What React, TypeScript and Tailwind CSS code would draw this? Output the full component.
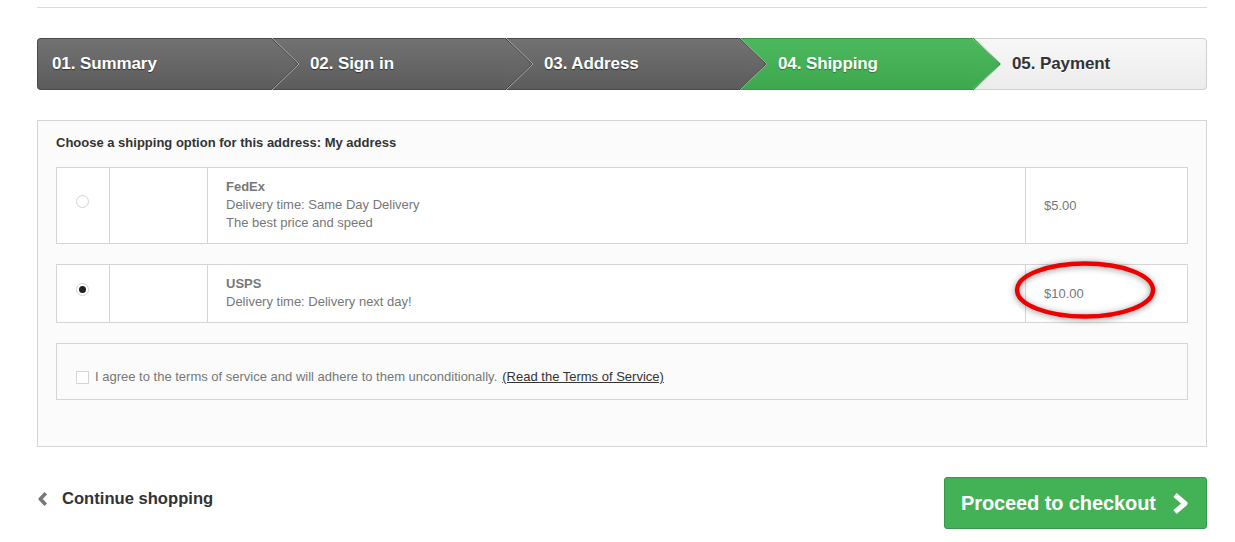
import React from 'react';

type Step = {
  label: string;
  kind: 'done' | 'current' | 'todo';
};

const STEPS: Step[] = [
  { label: '01. Summary', kind: 'done' },
  { label: '02. Sign in', kind: 'done' },
  { label: '03. Address', kind: 'done' },
  { label: '04. Shipping', kind: 'current' },
  { label: '05. Payment', kind: 'todo' },
];

// arrow head colours, same as the step body gradient
const ARROW = {
  done: { top: '#727272', bottom: '#5c5c5c', edge: '#a9a9a9', dark: '#3f3f3f' },
  current: { top: '#4cb85d', bottom: '#3ea84f', edge: '#9fdaa7', dark: '#2f8a3e' },
  todo: { top: '#f7f7f7', bottom: '#ececec', edge: '#cfcfcf', dark: '#cfcfcf' },
};

const Steps: React.FC = () => (
  <ul className="flex h-[52px]">
    {STEPS.map((step, i) => {
      const first = i === 0;
      const last = i === STEPS.length - 1;
      const c = ARROW[step.kind];
      const body =
        step.kind === 'done'
          ? 'bg-gradient-to-b from-[#727272] to-[#5c5c5c] border-[#4a4a4a] text-white [text-shadow:0_1px_1px_#333]'
          : step.kind === 'current'
          ? 'bg-gradient-to-b from-[#4cb85d] to-[#3ea84f] border-[#36994a] text-white [text-shadow:0_1px_1px_#2a7a36]'
          : 'bg-gradient-to-b from-[#f7f7f7] to-[#ececec] border-[#cfcfcf] text-[#333] [text-shadow:0_1px_#fff]';
      const z = ['z-50', 'z-40', 'z-30', 'z-20', 'z-10'][i];
      return (
        <li
          key={step.label}
          className={`relative flex w-[234px] items-center border-y text-[17px] font-bold tracking-[-0.1px] ${body} ${z} ${
            first ? 'rounded-l-[4px] border-l pl-[14px]' : 'pl-[39px]'
          } ${last ? 'rounded-r-[4px] border-r' : ''}`}
        >
          <span>{step.label}</span>
          {!last && (
            <svg
              className="absolute left-full top-[-1px] overflow-visible"
              width="28"
              height="52"
              viewBox="0 0 28 52"
            >
              <defs>
                <linearGradient id={`arrow-${i}`} x1="0" y1="0" x2="0" y2="1">
                  <stop offset="0" stopColor={c.top} />
                  <stop offset="1" stopColor={c.bottom} />
                </linearGradient>
              </defs>
              <polygon points="-1,0 27,26 -1,52" fill={`url(#arrow-${i})`} />
              <polyline points="0,0 27,26 0,52" fill="none" stroke={c.dark} strokeWidth="1" />
              <polyline points="1,0 28,26 1,52" fill="none" stroke={c.edge} strokeWidth="1" />
            </svg>
          )}
        </li>
      );
    })}
  </ul>
);

const Chevron: React.FC<{ dir: 'left' | 'right'; w: number; h: number; sw: number; className?: string }> = ({
  dir,
  w,
  h,
  sw,
  className,
}) => {
  const p = sw / 2 + 0.5;
  const pts =
    dir === 'right'
      ? `${p},${p} ${w - p},${h / 2} ${p},${h - p}`
      : `${w - p},${p} ${p},${h / 2} ${w - p},${h - p}`;
  return (
    <svg className={className} width={w} height={h} viewBox={`0 0 ${w} ${h}`}>
      <polyline points={pts} fill="none" stroke="currentColor" strokeWidth={sw} strokeLinejoin="round" />
    </svg>
  );
};

const Radio: React.FC<{ checked?: boolean }> = ({ checked }) => (
  <span className="flex h-[13px] w-[13px] items-center justify-center rounded-full border border-[#d3d3d3] bg-white">
    {checked && <span className="h-[7px] w-[7px] rounded-full bg-[#222]" />}
  </span>
);

const Carrier: React.FC<{
  checked?: boolean;
  name: string;
  lines: string[];
  price: string;
  circled?: boolean;
}> = ({ checked, name, lines, price, circled }) => (
  <div className="flex border border-[#d6d4d4] bg-white text-[13px] leading-[18px] text-[#777]">
    <div className="flex w-[53px] items-center justify-center border-r border-[#d6d4d4] pb-[9px] pr-[2px]">
      <Radio checked={checked} />
    </div>
    <div className="w-[98px] border-r border-[#d6d4d4]" />
    <div className="flex-1 border-r border-[#d6d4d4] px-[18px] pb-[11px] pt-[10px]">
      <div className="font-bold">{name}</div>
      {lines.map(l => (
        <div key={l}>{l}</div>
      ))}
    </div>
    <div className="relative flex w-[161px] items-center pl-[18px]">
      {price}
      {circled && (
        <svg
          className="absolute left-[-12px] top-[-4px] overflow-visible [filter:drop-shadow(0_1px_3px_rgba(0,0,0,0.45))]"
          width="142"
          height="58"
          viewBox="0 0 142 58"
        >
          <ellipse cx="71" cy="29" rx="68" ry="26.5" fill="none" stroke="#ee0000" strokeWidth="4.5" />
        </svg>
      )}
    </div>
  </div>
);

export default function App() {
  return (
    <div className="min-h-[542px] bg-white font-['Liberation_Sans',Arial,sans-serif]">
      <div className="ml-[37px] w-[1170px] pt-[7px]">
        <div className="border-t border-[#dcdcdc]" />

        <div className="mt-[30px]">
          <Steps />
        </div>

        {/* shipping options */}
        <div className="mt-[30px] border border-[#d6d4d4] bg-[#fbfbfb] px-[18px] pb-[46px] pt-[13px]">
          <p className="text-[13px] font-bold leading-[18px] text-[#333]">
            Choose a shipping option for this address: My address
          </p>
          <div className="mt-[15px] flex flex-col gap-[20px]">
            <Carrier
              name="FedEx"
              lines={['Delivery time: Same Day Delivery', 'The best price and speed']}
              price="$5.00"
            />
            <Carrier checked name="USPS" lines={['Delivery time: Delivery next day!']} price="$10.00" circled />
          </div>

          <div className="mt-[20px] flex items-center border border-[#d6d4d4] bg-[#fbfbfb] pb-[13px] pl-[19px] pt-[24px] text-[13px] leading-[18px] text-[#777]">
            <span className="mr-[6px] h-[13px] w-[13px] border border-[#d6d4d4] bg-white" />
            <span>I agree to the terms of service and will adhere to them unconditionally.</span>
            <a className="ml-[5px] text-[#333] underline">(Read the Terms of Service)</a>
          </div>
        </div>

        {/* footer actions */}
        <div className="mt-[30px] flex items-center justify-between">
          <a className="flex items-center pb-[8px] text-[16.6px] font-bold text-[#333]">
            <Chevron dir="left" w={10} h={16} sw={3.5} className="ml-[1px] mr-[14px] text-[#777]" />
            Continue shopping
          </a>
          <button className="flex h-[52px] w-[263px] items-center rounded-[3px] border border-[#36994a] bg-[#43b155] pl-[16px] text-[20px] font-bold text-white">
            <span className="tracking-[-0.1px]">Proceed to checkout</span>
            <Chevron dir="right" w={16} h={23} sw={5} className="ml-[16px]" />
          </button>
        </div>
      </div>
    </div>
  );
}
